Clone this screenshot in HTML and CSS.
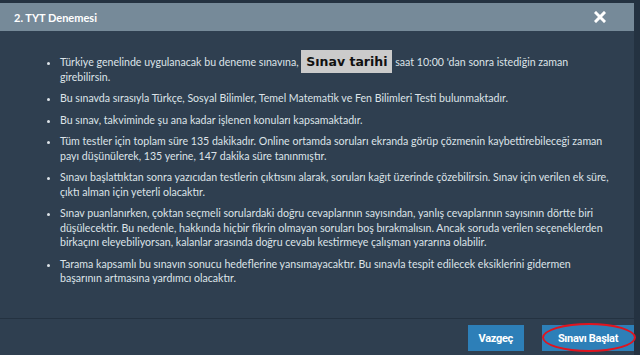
FILE: index.html
```html
<!DOCTYPE html>
<html lang="tr">
<head>
    <meta charset="UTF-8">
    <meta name="viewport" content="width=device-width, initial-scale=1.0">
    <title>2. TYT Denemesi</title>
    <link rel="stylesheet" href="styles.css">
</head>
<body>
    <div class="modal">
        <div class="modal-header">
            <h4>2. TYT Denemesi</h4>
            <button class="close" aria-label="Kapat">
                <svg width="12" height="12" viewBox="0 0 12 12">
                    <path d="M2 2 L10 10 M10 2 L2 10" stroke="#fff" stroke-width="3" stroke-linecap="square"/>
                </svg>
            </button>
        </div>

        <div class="modal-body">
            <ul>
                <li>Türkiye genelinde uygulanacak bu deneme sınavına, <span class="date">Sınav tarihi</span> saat 10:00 'dan sonra istediğin zaman girebilirsin.</li>
                <li>Bu sınavda sırasıyla Türkçe, Sosyal Bilimler, Temel Matematik ve Fen Bilimleri Testi bulunmaktadır.</li>
                <li>Bu sınav, takviminde şu ana kadar işlenen konuları kapsamaktadır.</li>
                <li>Tüm testler için toplam süre 135 dakikadır. Online ortamda soruları ekranda görüp çözmenin kaybettirebileceği zaman payı düşünülerek, 135 yerine, 147 dakika süre tanınmıştır.</li>
                <li>Sınavı başlattıktan sonra yazıcıdan testlerin çıktısını alarak, soruları kağıt üzerinde çözebilirsin. Sınav için verilen ek süre, çıktı alman için yeterli olacaktır.</li>
                <li>Sınav puanlanırken, çoktan seçmeli sorulardaki doğru cevaplarının sayısından, yanlış cevaplarının sayısının dörtte biri düşülecektir. Bu nedenle, hakkında hiçbir fikrin olmayan soruları boş bırakmalısın. Ancak soruda verilen seçeneklerden birkaçını eleyebiliyorsan, kalanlar arasında doğru cevabı kestirmeye çalışman yararına olabilir.</li>
                <li>Tarama kapsamlı bu sınavın sonucu hedeflerine yansımayacaktır. Bu sınavla tespit edilecek eksiklerini gidermen başarının artmasına yardımcı olacaktır.</li>
            </ul>
        </div>

        <div class="modal-footer">
            <button class="btn">Vazgeç</button>
            <button class="btn btn-start">Sınavı Başlat</button>
        </div>
    </div>
</body>
</html>
```

FILE: styles.css
```css
html, body {
    margin: 0;
    height: 100%;
    overflow: hidden;
}
body {
    background: #243241;
    font-family: Lato, "Open Sans", sans-serif;
    color: #dde3e8;
}
.modal {
    margin: 3px 6px 0 0;
    background: #2f3f50;
    height: 352px;
}
.modal-header {
    display: flex;
    align-items: center;
    justify-content: space-between;
    height: 28px;
    padding: 0 28px 0 14px;
    background: #768a99;
}
.modal-header h4 {
    margin: 0;
    font-size: 11px;
    font-weight: bold;
    color: #fff;
}
.close {
    display: flex;
    padding: 0;
    background: none;
    border: none;
    cursor: pointer;
}
.modal-body {
    height: 263px;
    padding: 24px 20px 0 0;
    border-bottom: 1px solid #243241;
}
.modal-body ul {
    margin: 0;
    padding-left: 60px;
    font-size: 10.6px;
    line-height: 14.5px;
}
.modal-body li {
    margin-bottom: 7px;
}
.date {
    padding: 4px 5px 4px;
    background: #cbcbcb;
    color: #111;
    font-family: "DejaVu Sans", sans-serif;
    font-weight: bold;
    font-size: 12.5px;
    line-height: 1;
}
.modal-footer {
    display: flex;
    justify-content: flex-end;
    gap: 18px;
    padding: 6px 0 0;
}
.btn {
    height: 26px;
    padding: 0 11px;
    background: #2d7fb8;
    color: #fff;
    border: none;
    font-family: Roboto, sans-serif;
    font-weight: bold;
    font-size: 11px;
    letter-spacing: -0.3px;
    cursor: pointer;
}
.btn-start {
    position: relative;
    width: 92px;
}
/* annotation ring drawn over the button */
.btn-start::after {
    content: "";
    position: absolute;
    left: 0;
    right: -2px;
    top: -2px;
    bottom: -1px;
    border: 2px solid #e0141e;
    border-radius: 50%;
}
```
